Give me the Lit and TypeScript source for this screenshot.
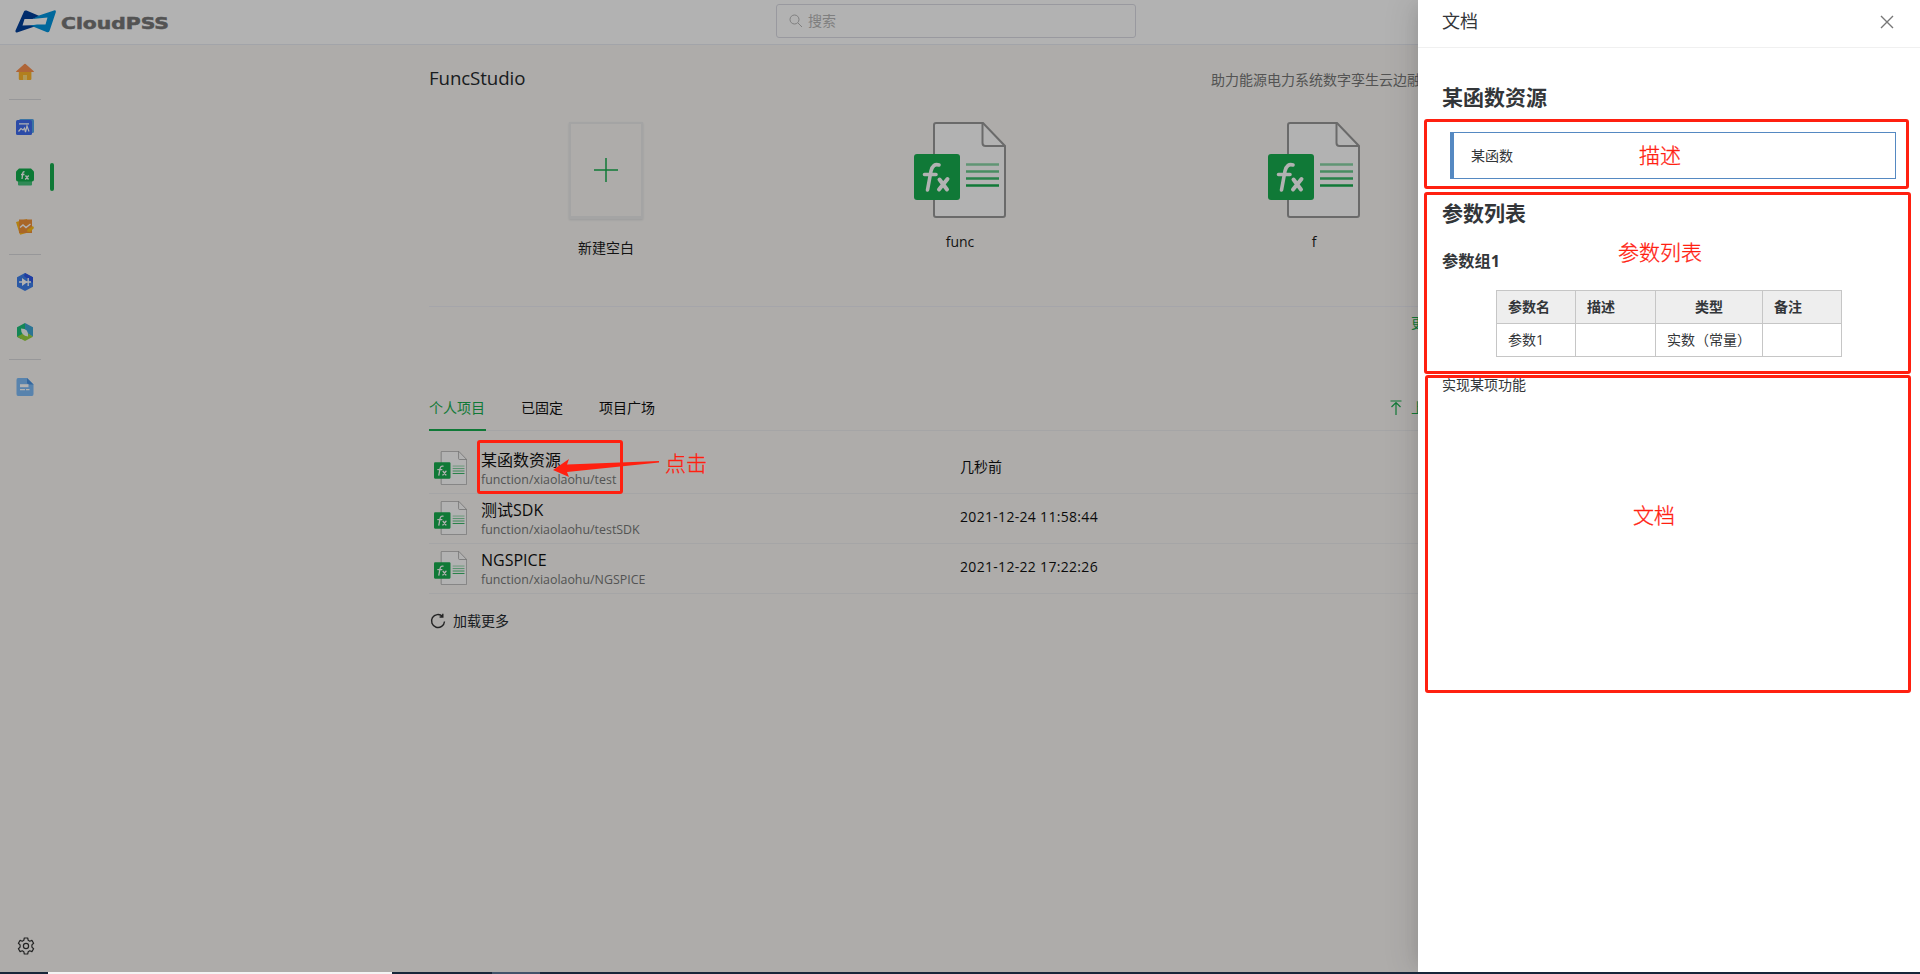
import { LitElement, html, css } from "lit";
import { customElement } from "lit/decorators.js";

const fnIcon = html`<svg viewBox="0 0 92 96" preserveAspectRatio="none">
  <path d="M22 1H69L91 24V93a2 2 0 0 1-2 2H22a2 2 0 0 1-2-2V3a2 2 0 0 1 2-2z" fill="#fff" stroke="#999" stroke-width="2"/>
  <path d="M68.500 1V21a3 3 0 0 0 3 3H91" fill="none" stroke="#999" stroke-width="2"/>
  <rect y="32" width="46" height="46" rx="3" fill="#18ae4f"/>
  <path d="M25 43q-6-2-8 6L13.500 68M10.500 52.500H22" fill="none" stroke="#fff" stroke-width="3.600" stroke-linecap="round" stroke-linejoin="round"/>
  <path d="M25.500 57.500L33 67.500M33.500 57L25 67.500" fill="none" stroke="#fff" stroke-width="4" stroke-linecap="round"/>
  <g stroke="#18ae4f" stroke-width="2.400"><path d="M52 42.500H85" opacity=".5"/><path d="M52 49.500H85" opacity=".65"/><path d="M52 56.500H85" opacity=".85"/><path d="M52 63.500H85"/></g>
</svg>`;

const logo = html`<svg class="mark" viewBox="0 0 41 23">
  <path d="M9 1.500Q9.600 0 11.500.6L25 6.200 17.500 9H9.500L7.500 15.500 24 15 2 22.500Q0 23 .5 20.500z" fill="#003f9b"/>
  <path d="M24 5.500L39 .4Q41.500 0 40.700 2.500L34.500 21Q33.800 22.800 31.500 22L15.500 15.500 22 14.500H30.500L32.500 7.500 17.500 9z" fill="#0095e0"/>
</svg>`;

const nav: Record<string, unknown> = {
  home: html`<svg viewBox="0 0 18 18"><path d="M2.800 8h12.600v8q0 1-1 1H3.800q-1 0-1-1z" fill="#ffb62a"/><path d="M9 .8Q9.600.8 10.500 1.700L17.500 8Q18.500 9 17 9H1Q-.5 9 .5 8L7.500 1.700Q8.400.8 9 .8z" fill="#fb9150"/><path d="M7 12h4v5H7z" fill="#ffdc7c"/></svg>`,
  model: html`<svg viewBox="0 0 18 18"><rect x="3" y="1" width="15" height="14" rx="1.500" fill="#55a6ea"/><rect y="2" width="16" height="15" rx="1.500" fill="#3f6cf0"/><path d="M3 5.800h10M2.500 13.500l2.500-3 2 1.500 1.500-2L9.500 14l1.500-6 2 5.500" fill="none" stroke="#fff" stroke-width="1.200"/></svg>`,
  func: html`<svg viewBox="0 0 18 18"><rect x="2" y="9" width="14" height="8.500" rx="1" fill="#45c47c"/><path d="M3 .5h12l2 2q1 .5 1 2V11.500q0 2-2 2H2q-2 0-2-2V4.500q0-1.500 1-2z" fill="#12ae4c"/><path d="M8.500 3.800Q7 3.500 6.700 5.500L6 11M5 6.500h3.500M9.500 7.500l3 4M12.700 7.500l-3.500 4" fill="none" stroke="#fff" stroke-width="1.300"/></svg>`,
  dash: html`<svg viewBox="0 0 18 18"><path d="M0 4L11 1 14 14 5 16.500Q4 17 3.500 15.500z" fill="#ffb81c"/><path d="M3 1.500H16V15H3z" fill="#f39238"/><path d="M11.500 11.500L17 8l1 2-4 4-3-.5z" fill="#ffbf18"/><path d="M4 9.500l3-2.500 3 2.500 4.500-3.500" fill="none" stroke="#fff" stroke-width="1.400"/></svg>`,
  diode: html`<svg viewBox="0 0 18 18"><path d="M9 0L17 4.300V13.700L9 18 1 13.700V4.300z" fill="#3e80ec"/><path d="M9 0L17 4.300V10L8 3z" fill="#2f58e8"/><path d="M6 5v8l5.500-4z" fill="#fff"/><path d="M3 9h12M12.200 5v8" stroke="#fff" stroke-width="1.300"/></svg>`,
  leaf: html`<svg viewBox="0 0 18 18"><path d="M9 0L1 4.300V13.700L5 16 9 9z" fill="#1cc07c"/><path d="M9 0L17 4.300V13.700L9 9z" fill="#3ea6d4"/><path d="M1 13.700L9 18l8-4.300L10 9z" fill="#98d440"/><path d="M5 5.500q8 0 7 8-7-.5-7-8z" fill="#f4fbf8"/></svg>`,
  doc: html`<svg viewBox="0 0 18 18"><path d="M2 0h9l6.500 6.500V16q0 2-1.500 2H2Q.5 18 .5 16V2Q.5 0 2 0z" fill="#7fbcf8"/><path d="M11 0l6.500 6.500H13q-2 0-2-2z" fill="#4a94e4"/><path d="M4 6.200h8.500v3H4z" fill="#fff"/><path d="M4 11.700h5M10 11.700h3.500" stroke="#fff" stroke-width="1.200"/></svg>`,
};

const rows = [
  ["某函数资源", "function/xiaolaohu/test", "几秒前"],
  ["测试SDK", "function/xiaolaohu/testSDK", "2021-12-24 11:58:44"],
  ["NGSPICE", "function/xiaolaohu/NGSPICE", "2021-12-22 17:22:26"],
];

@customElement("app-root")
class AppRoot extends LitElement {
  static styles = css`
    :host { display: block; position: relative; width: 1920px; height: 974px; overflow: hidden; background: #f9f7f4; color: #262a2e;
      font: 14px/22px "Open Sans", "Noto Sans CJK SC", sans-serif; }
    * { box-sizing: border-box; }
    svg { display: block; }
    .page { height: 972px; display: flex; flex-direction: column; }
    header { height: 45px; flex: none; display: grid; grid-template-columns: 776px 360px 1fr; background: #fff; border-bottom: 1px solid #e9ebf2; }
    .brand { display: flex; padding: 10px 0 0 15px; gap: 5px; }
    .mark { width: 41px; height: 23px; }
    .word { width: 110px; height: 22px; font: bold 16px "DejaVu Sans", sans-serif; }
    .search { margin-top: 4px; height: 34px; border: 1px solid #dbdce4; border-radius: 3px; display: flex; align-items: center; gap: 5px; padding-left: 12px; color: #b7b7b7; }
    .body { flex: 1; display: flex; min-height: 0; }
    nav { width: 54px; display: flex; flex-direction: column; padding: 2px 0 0 9px; }
    .item { height: 50px; display: flex; align-items: center; padding-left: 7px; justify-content: space-between; flex: none; }
    .item svg { width: 18px; height: 18px; }
    .bar { width: 4px; height: 28px; border-radius: 2px; background: #18ae4f; }
    .sep { width: 32px; height: 1px; margin: 2px 0 2px; background: #d8d8dc; flex: none; }
    .gear { margin: auto 0 17px 8px; }
    main { width: 1062px; margin-left: 375px; }
    .head { display: flex; justify-content: space-between; align-items: center; height: 68px; padding-bottom: 3px; }
    .head h1 { font-size: 18.700px; font-weight: 400; margin: 0; letter-spacing: -.1px; }
    .tag { width: 280px; white-space: nowrap; color: #777; margin-top: 4px; }
    .cards { display: grid; grid-template-columns: repeat(3, 354px); height: 194px; border-bottom: 1px solid #ececf4; padding-top: 9px; }
    .card { display: flex; flex-direction: column; align-items: center; color: #1c1c1c; }
    .card svg { width: 92px; height: 96px; }
    .card span { margin-top: 13px; }
    .blank { width: 74px; height: 97px; border: 2px solid #ebebeb; border-bottom-width: 3px; box-shadow: 0 1px 2px #ddd; display: grid; place-items: center; }
    .card .blank svg { width: 24px; height: 24px; }
    .card .blank + span { margin-top: 18px; }
    .more { height: 80px; padding: 5px 0 0 982px; color: #18ae4f; white-space: nowrap; }
    .tabs { display: flex; height: 44px; border-bottom: 1px solid #ececee; align-items: stretch; color: #111; }
    .tab { padding-top: 10px; margin-right: 36px; height: 44px; }
    .tab.on { color: #18ae4f; border-bottom: 2px solid #18ae4f; width: 57px; margin-right: 35px; }
    .upload { display: flex; gap: 9px; margin-left: auto; width: 101px; padding-top: 10px; color: #18ae4f; white-space: nowrap; }
    .upload svg { margin-top: 3px; }
    .list { padding-top: 13px; }
    .row { height: 50px; border-bottom: 1px solid #ececee; display: grid; grid-template-columns: 52px 479px 1fr; align-items: center; color: #111; }
    .row svg { width: 33px; height: 34px; margin: 0 0 2px 5px; }
    .name { font-size: 16px; line-height: 20px; color: #111; margin-top: 2px; }
    .path { font-size: 12.400px; line-height: 20px; color: #777; white-space: nowrap; }
    .time { letter-spacing: .31px; padding-bottom: 3px; }
    .time.cjk { letter-spacing: 0; }
    .load { display: flex; gap: 7px; align-items: center; margin-top: 16px; padding-left: 1px; }
    .task { height: 2px; display: grid; grid-template-columns: 48px 344px 100px 48px 1fr; background: #17263a; }
    .task i:nth-child(2) { background: #f4f4f4; }
    .task i:nth-child(4) { background: #42536a; }
    .mask { position: absolute; inset: 0 0 2px 0; background: rgba(0, 0, 0, .3); }
    .drawer { position: absolute; right: 0; top: 0; width: 502px; height: 972px; background: #fff; box-shadow: -6px 0 16px -8px rgba(0,0,0,.12), -9px 0 28px rgba(0,0,0,.08); clip-path: inset(0 0 0 -60px); color: #333639; }
    .dhead { height: 48px; border-bottom: 1px solid #f0f0f0; display: flex; justify-content: space-between; align-items: flex-start; padding: 10px 26px 0 24px; font-size: 18px; }
    .dhead svg { margin-top: 5px; }
    .dbody { padding: 34px 24px 0 24px; }
    h2 { font-size: 21px; line-height: 30px; font-weight: 700; margin: 0; }
    .quote { margin: 20px 0 0 8px; height: 47px; border: 1px solid #5589c2; border-left-width: 4px; padding: 12px 17px; font-size: 14px; }
    .second { margin-top: 19px; }
    h3 { font-size: 16.300px; line-height: 24px; margin: 21px 0 17px; font-weight: 700; }
    table { border-collapse: collapse; margin-left: 54px; table-layout: fixed; width: 346px; line-height: 20px; }
    td, th { border: 1px solid #c6c6c6; height: 33px; padding: 0 11px; text-align: left; white-space: nowrap; }
    th { background: #eee; }
    .c { text-align: center; padding: 0; }
    .desc { margin: 17px 0 0; }
    .box { position: absolute; border: 3px solid #ff2010; border-radius: 3px; }
    .b1 { left: 1424px; top: 119px; width: 485px; height: 70px; }
    .b2 { left: 1424px; top: 192px; width: 487px; height: 182px; }
    .b3 { left: 1425px; top: 375px; width: 486px; height: 318px; }
    .b4 { left: 477px; top: 440px; width: 146px; height: 54px; }
    .note { position: absolute; font-size: 21px; line-height: 30px; color: #ff2010; font-weight: 300; -webkit-text-stroke: .3px #ff2010; white-space: nowrap; }
    .n1 { left: 1639px; top: 140px; }
    .n2 { left: 1618px; top: 237px; }
    .n3 { left: 1633px; top: 500px; }
    .n4 { left: 665px; top: 448px; }
    .arrow { position: absolute; left: 553px; top: 458px; }
  `;

  item(k: string) {
    return html`<div class="item">${nav[k]}${k === "func" ? html`<div class="bar"></div>` : ""}</div>`;
  }

  render() {
    return html`
      <div class="page">
        <header>
          <div class="brand">${logo}<svg class="word" viewBox="0 0 110 22"><text x="0" y="19" textLength="108" lengthAdjust="spacingAndGlyphs" fill="#777" stroke="#777" stroke-width=".5">CloudPSS</text></svg></div>
          <div class="search"><svg width="14" height="14" viewBox="0 0 14 14" fill="none" stroke="#b7b7b7"><circle cx="5.500" cy="5.500" r="4.500"/><path d="M9 9l4 4"/></svg>搜索</div>
        </header>
        <div class="body">
          <nav>
            ${this.item("home")}<div class="sep"></div>
            ${this.item("model")}${this.item("func")}${this.item("dash")}<div class="sep"></div>
            ${this.item("diode")}${this.item("leaf")}<div class="sep"></div>
            ${this.item("doc")}
            <svg class="gear" width="18" height="18" viewBox="0 0 18 18" fill="none" stroke="#333" stroke-width="1.200"><circle cx="9" cy="9" r="2.600"/><path d="M7.300 1h3.400l.5 2.300 1.500.9 2.200-.8 1.700 2.900-1.700 1.600v2.200l1.700 1.600-1.700 2.900-2.200-.8-1.500.9-.5 2.300H7.300l-.5-2.300-1.500-.9-2.200.8-1.700-2.900 1.700-1.600V7.900L1.400 6.300l1.700-2.900 2.200.8 1.500-.9z" stroke-linejoin="round"/></svg>
          </nav>
          <main>
            <div class="head"><h1>FuncStudio</h1><div class="tag">助力能源电力系统数字孪生云边融合</div></div>
            <div class="cards">
              <div class="card"><div class="blank"><svg viewBox="0 0 24 24"><path d="M12 0v24M0 12h24" stroke="#18ae4f" stroke-width="1.500"/></svg></div><span>新建空白</span></div>
              <div class="card">${fnIcon}<span>func</span></div>
              <div class="card">${fnIcon}<span>f</span></div>
            </div>
            <div class="more">更多</div>
            <div class="tabs">
              <div class="tab on">个人项目</div><div class="tab">已固定</div><div class="tab">项目广场</div>
              <div class="upload"><svg width="12" height="15" viewBox="0 0 12 15" fill="none" stroke="#18ae4f" stroke-width="1.200"><path d="M.5 1h11M6 15V3M1.500 7L6 2.500 10.500 7"/></svg>上传</div>
            </div>
            <div class="list">
              ${rows.map(([n, p, t]) => html`<div class="row">${fnIcon}<div><div class="name">${n}</div><div class="path">${p}</div></div><div class="time ${/^\d/.test(t) ? "" : "cjk"}">${t}</div></div>`)}
            </div>
            <div class="load"><svg width="16" height="16" viewBox="0 0 16 16" fill="none" stroke="#333" stroke-width="1.400"><path d="M14.500 8.500a6.500 6.500 0 1 1-2-5.200M12.800.8v3.200H9.600"/></svg>加载更多</div>
          </main>
        </div>
      </div>
      <div class="task"><i></i><i></i><i></i><i></i></div>
      <div class="mask"></div>
      <aside class="drawer">
        <div class="dhead"><span>文档</span><svg width="14" height="14" viewBox="0 0 14 14" stroke="#777" stroke-width="1.400"><path d="M1 1l12 12M13 1L1 13"/></svg></div>
        <div class="dbody">
          <h2>某函数资源</h2>
          <div class="quote">某函数</div>
          <h2 class="second">参数列表</h2>
          <h3>参数组1</h3>
          <table>
            <colgroup><col width="79"><col width="80"><col width="107"><col width="79"></colgroup>
            <tr><th>参数名</th><th>描述</th><th class="c">类型</th><th>备注</th></tr>
            <tr><td>参数1</td><td></td><td class="c">实数（常量）</td><td></td></tr>
          </table>
          <p class="desc">实现某项功能</p>
        </div>
      </aside>
      <div class="box b1"></div><div class="box b2"></div><div class="box b3"></div><div class="box b4"></div>
      <svg class="arrow" width="108" height="20" viewBox="0 0 108 20"><path d="M0 12L16 1 14 6.500 106 3V4.500L14 14 16 19z" fill="#ff2010"/></svg>
      <div class="note n1">描述</div><div class="note n2">参数列表</div><div class="note n3">文档</div><div class="note n4">点击</div>
    `;
  }
}
